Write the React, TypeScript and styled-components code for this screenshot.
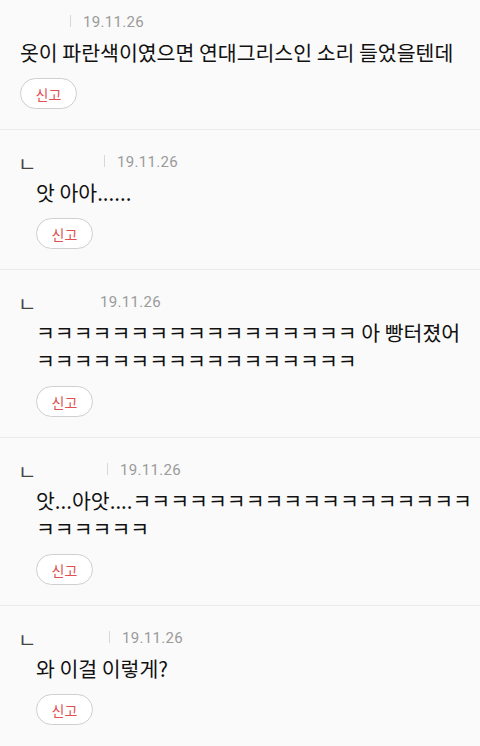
import styled, { createGlobalStyle } from 'styled-components';

type Comment = {
  id: number;
  reply: boolean;
  nameWidth: number;
  divider: boolean;
  date: string;
  lines: string[];
};

const COMMENTS: Comment[] = [
  {
    id: 1,
    reply: false,
    nameWidth: 43,
    divider: true,
    date: '19.11.26',
    lines: ['옷이 파란색이였으면 연대그리스인 소리 들었을텐데'],
  },
  {
    id: 2,
    reply: true,
    nameWidth: 61,
    divider: true,
    date: '19.11.26',
    lines: ['앗 아아......'],
  },
  {
    id: 3,
    reply: true,
    nameWidth: 57,
    divider: false,
    date: '19.11.26',
    lines: ['ㅋㅋㅋㅋㅋㅋㅋㅋㅋㅋㅋㅋㅋㅋㅋㅋㅋ 아 빵터졌어', 'ㅋㅋㅋㅋㅋㅋㅋㅋㅋㅋㅋㅋㅋㅋㅋㅋㅋ'],
  },
  {
    id: 4,
    reply: true,
    nameWidth: 64,
    divider: true,
    date: '19.11.26',
    lines: ['앗...아앗....ㅋㅋㅋㅋㅋㅋㅋㅋㅋㅋㅋㅋㅋㅋㅋㅋㅋㅋ', 'ㅋㅋㅋㅋㅋㅋ'],
  },
  {
    id: 5,
    reply: true,
    nameWidth: 66,
    divider: true,
    date: '19.11.26',
    lines: ['와 이걸 이렇게?'],
  },
];

export default function App() {
  return (
    <>
      <GlobalStyle />
      <List>
        {COMMENTS.map(comment => (
          <Item key={comment.id}>
            <Header>
              {comment.reply && <ReplyMark>ㄴ</ReplyMark>}
              <Name $width={comment.nameWidth} aria-hidden />
              {comment.divider && <Divider />}
              <DateText>{comment.date}</DateText>
            </Header>

            <Body $reply={comment.reply}>
              <Message>
                {comment.lines.map((line, i) => (
                  <Line key={i}>{line}</Line>
                ))}
              </Message>
              <ReportButton type="button">신고</ReportButton>
            </Body>
          </Item>
        ))}
      </List>
    </>
  );
}

const GlobalStyle = createGlobalStyle`
  html, body {
    margin: 0;
    padding: 0;
    background: #fafafa;
    overflow: hidden;
  }
  body {
    font-family: 'Noto Sans CJK KR', 'Noto Sans', sans-serif;
    color: #111;
  }
`;
const List = styled.div`
  display: flex;
  flex-direction: column;
  width: 480px;
`;
const Item = styled.div`
  display: flex;
  flex-direction: column;
  padding: 20px 6px 20px 20px;
  border-bottom: 1px solid #ebebeb;

  &:first-child {
    padding-top: 10px;
  }
  &:last-child {
    border-bottom: none;
  }
`;
const Header = styled.div`
  display: flex;
  align-items: center;
  height: 20px;
`;
const ReplyMark = styled.span`
  width: 16px;
  font-size: 20px;
  line-height: 1;
  color: #444;
  margin-top: 7px;
  margin-left: -2px;
  margin-right: 2px;
`;
const Name = styled.span<{ $width: number }>`
  width: ${p => p.$width}px;
  height: 16px;
  margin-right: 7px;
`;
const Divider = styled.span`
  width: 1px;
  height: 12px;
  background: #d8d8d8;
  margin-top: 2px;
  margin-right: 12px;
`;
const DateText = styled.span`
  font-family: Roboto, 'Liberation Sans', sans-serif;
  font-size: 15px;
  letter-spacing: 0.3px;
  color: #9a9a9a;
  padding-top: 3px;
`;
const Body = styled.div<{ $reply: boolean }>`
  display: flex;
  flex-direction: column;
  align-items: flex-start;
  gap: 12px;
  padding-left: ${p => (p.$reply ? 16 : 0)}px;
  margin-top: 8px;
`;
const Message = styled.div`
  font-size: 20.5px;
  line-height: 28px;
  color: #111;
`;
const Line = styled.div`
  white-space: nowrap;
`;
const ReportButton = styled.button`
  width: 57px;
  height: 31px;
  border: 1px solid #cfcfcf;
  border-radius: 16px;
  background: #fff;
  font-family: 'Noto Sans CJK KR', sans-serif;
  font-size: 14px;
  color: #e05050;
  padding: 0;
`;
